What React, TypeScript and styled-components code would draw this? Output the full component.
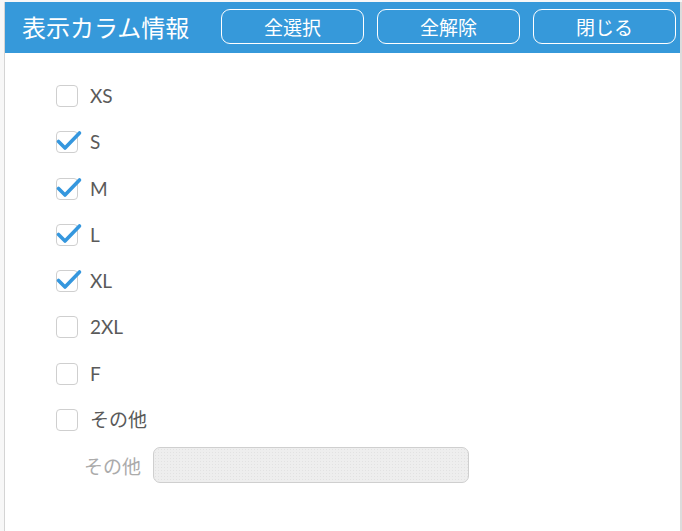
import React, { FC, useState } from 'react'
import styled, { createGlobalStyle } from 'styled-components'

const GlobalStyle = createGlobalStyle`
  html, body {
    margin: 0;
    padding: 0;
    background: #f7f7f7;
  }
  body {
    font-family: Lato, "Noto Sans CJK JP", sans-serif;
  }
`;

const SIZES = ['XS', 'S', 'M', 'L', 'XL', '2XL', 'F', 'その他'];

interface CheckProps {
  label: string;
  checked: boolean;
  onToggle: () => void;
}

const CheckRow: FC<CheckProps> = ({ label, checked, onToggle }) => (
  <StyledRow onClick={onToggle}>
    <Box $checked={checked}>
      {checked && (
        <svg width="26" height="24" viewBox="0 0 26 24">
          <path d="M2.5 12.5 L9 19 L23.5 4" />
        </svg>
      )}
    </Box>
    <RowText>{label}</RowText>
  </StyledRow>
);

export default function App() {
  const [checked, setChecked] = useState<Record<string, boolean>>({
    S: true, M: true, L: true, XL: true,
  });

  const toggle = (key: string) => {
    setChecked({ ...checked, [key]: !checked[key] });
  };

  const setAll = (value: boolean) => {
    const next: Record<string, boolean> = {};
    SIZES.forEach(s => { next[s] = value; });
    setChecked(next);
  };

  return (
    <>
      <GlobalStyle />
      <Page>
        <Panel>
          <Header>
            <Title>表示カラム情報</Title>
            <Actions>
              <HeadButton onClick={() => setAll(true)}>全選択</HeadButton>
              <HeadButton onClick={() => setAll(false)}>全解除</HeadButton>
              <HeadButton>閉じる</HeadButton>
            </Actions>
          </Header>

          <List>
            {SIZES.map(s => (
              <CheckRow
                key={s}
                label={s}
                checked={!!checked[s]}
                onToggle={() => toggle(s)}
              />
            ))}
            <OtherRow>
              <OtherLabel>その他</OtherLabel>
              <OtherInput disabled={!checked['その他']} />
            </OtherRow>
          </List>
        </Panel>
      </Page>
    </>
  )
}

const Page = styled.div`
  padding: 2px 0 0 4px;
  min-height: 100vh;
  box-sizing: border-box;
`;

const Panel = styled.section`
  background: #fff;
  border-left: 1px solid #d4d4d4;
  border-right: 2px solid #dcdcdc;
  min-height: calc(100vh - 2px);
  box-sizing: border-box;
`;

const Header = styled.header`
  height: 51px;
  background: #3699da;
  display: flex;
  align-items: center;
  justify-content: space-between;
  padding: 0 4px 0 17px;
`;

const Title = styled.h2`
  margin: 0;
  color: #fff;
  font-size: 24px;
  font-weight: 400;
  letter-spacing: 0;
  margin-top: -2px;
`;

const Actions = styled.div`
  display: flex;
  gap: 13px;
  margin-top: -2px;
`;

const HeadButton = styled.button`
  width: 143px;
  height: 35px;
  border: 1px solid #fff;
  border-radius: 9px;
  background: transparent;
  color: #fff;
  font-family: Lato, "Noto Sans CJK JP", sans-serif;
  font-size: 19px;
  padding: 0;
  cursor: pointer;
`;

const List = styled.div`
  display: flex;
  flex-direction: column;
  gap: 24.3px;
  padding: 32px 0 40px 51px;
`;

const StyledRow = styled.label`
  display: flex;
  align-items: center;
  height: 22px;
  gap: 12px;
  cursor: pointer;
`;

const Box = styled.span<{ $checked: boolean }>`
  position: relative;
  width: 22px;
  height: 22px;
  box-sizing: border-box;
  border: 1px solid #cfcfcf;
  border-radius: 4px;
  background: #fff;
  flex-shrink: 0;
  svg {
    position: absolute;
    left: -1px;
    top: -3px;
    overflow: visible;
  }
  path {
    fill: none;
    stroke: #3597de;
    stroke-width: 3.6;
    stroke-linecap: round;
    stroke-linejoin: round;
  }
`;

const RowText = styled.span`
  color: #5a5a5a;
  font-size: 19px;
  line-height: 22px;
`;

const OtherRow = styled.div`
  display: flex;
  align-items: center;
  gap: 12px;
  padding-left: 28px;
  margin-top: -8px;
`;

const OtherLabel = styled.span`
  color: #ababab;
  font-size: 19px;
`;

const OtherInput = styled.input`
  width: 316px;
  height: 36px;
  box-sizing: border-box;
  border: 1px solid #cfcfcf;
  border-radius: 7px;
  background-color: #eeeeee;
  background-image: radial-gradient(#e2e2e2 0.6px, transparent 0.8px);
  background-size: 3px 3px;
  outline: none;
`;
